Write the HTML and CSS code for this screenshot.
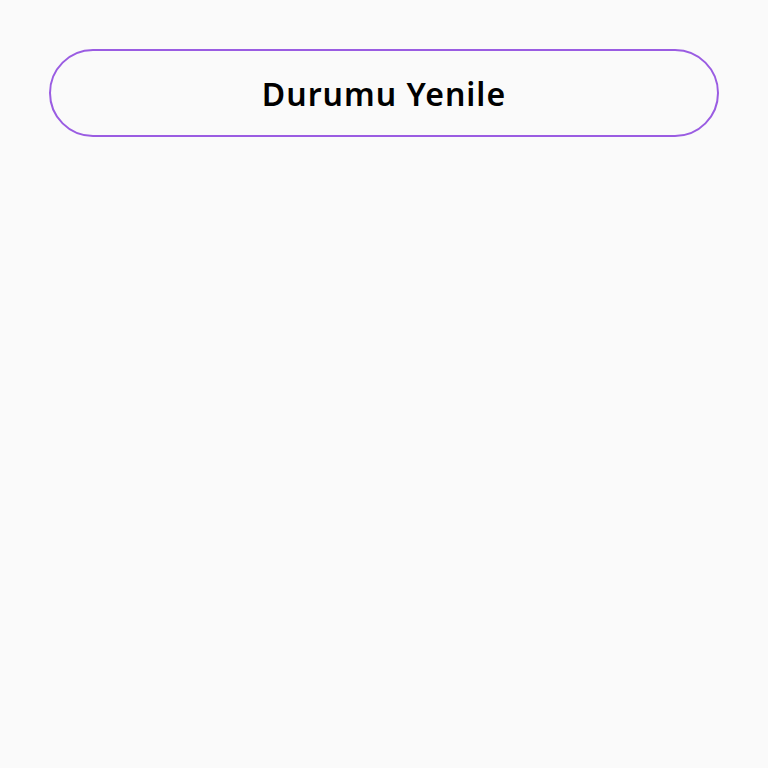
FILE: index.html
```html
<!DOCTYPE html>
<html>
<head>
<meta charset="utf-8">
<link rel="stylesheet" href="styles.css">
</head>
<body>
<div class="page">
  <button class="refresh">Durumu Yenile</button>
</div>
</body>
</html>
```

FILE: styles.css
```css
html, body {
  margin: 0;
  padding: 0;
  background: #fafafa;
  width: 768px;
  height: 768px;
}
.page {
  padding: 49px 49px 0 49px;
  display: flex;
  flex-direction: column;
}
.refresh {
  height: 88px;
  width: 100%;
  box-sizing: border-box;
  border: 2px solid #9a5ce2;
  border-radius: 44px;
  background: transparent;
  font-family: "Noto Sans", "Open Sans", sans-serif;
  font-weight: 600;
  font-size: 32px;
  letter-spacing: 1px;
  color: #000;
  display: flex;
  align-items: center;
  justify-content: center;
  padding: 0;
}
```
